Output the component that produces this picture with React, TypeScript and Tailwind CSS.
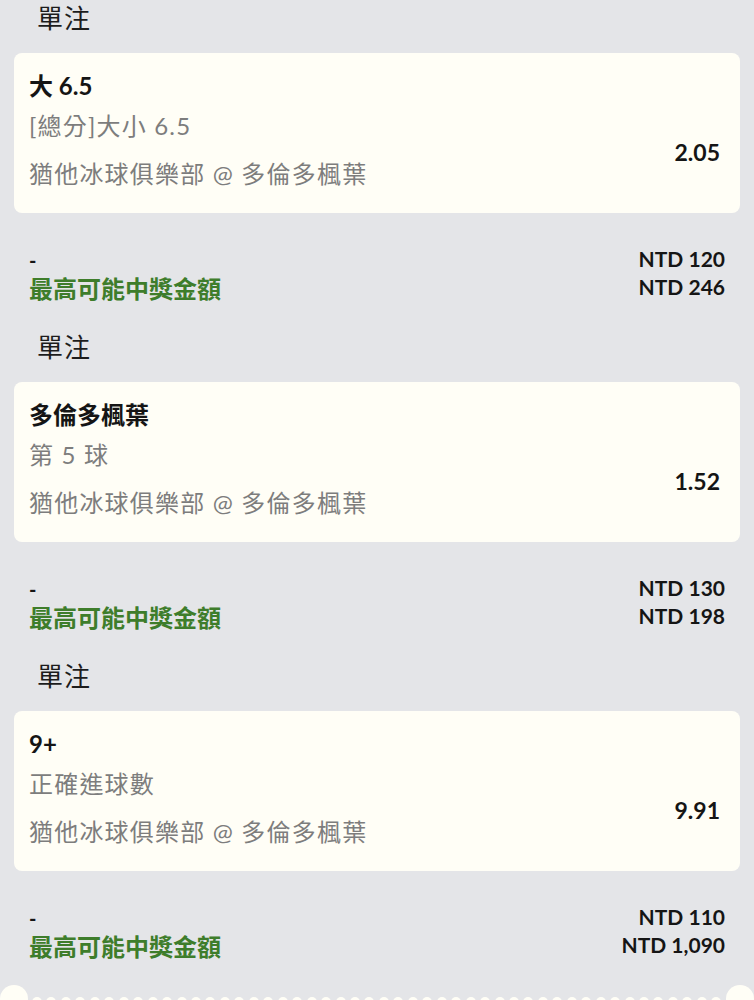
import React from 'react';

type Bet = {
  pick: string;
  market: string;
  event: string;
  odds: string;
  stake: string;
  payout: string;
};

const bets: Bet[] = [
  { pick: '大 6.5', market: '[總分]大小 6.5', event: '猶他冰球俱樂部 @ 多倫多楓葉', odds: '2.05', stake: 'NTD 120', payout: 'NTD 246' },
  { pick: '多倫多楓葉', market: '第 5 球', event: '猶他冰球俱樂部 @ 多倫多楓葉', odds: '1.52', stake: 'NTD 130', payout: 'NTD 198' },
  { pick: '9+', market: '正確進球數', event: '猶他冰球俱樂部 @ 多倫多楓葉', odds: '9.91', stake: 'NTD 110', payout: 'NTD 1,090' },
];

const font = { fontFamily: 'Lato, "Noto Sans CJK TC", sans-serif' };

const BetSection = ({ bet }: { bet: Bet }) => (
  <div className="flex flex-col">
    <div className="pl-[37px] text-[26px] leading-[36px] tracking-[1px] text-[#1c1c1c]">單注</div>

    <div className="mx-[14px] mt-[17px] flex h-[160px] justify-between rounded-[8px] bg-[#fffef6] pl-[15px] pr-[20px]">
      <div className="flex flex-col">
        <div className="mt-[18px] text-[24px] font-bold leading-[30px] text-[#151515]">{bet.pick}</div>
        <div className="mt-[10px] text-[24px] leading-[30px] tracking-[1.2px] text-[#7d7d7d]">{bet.market}</div>
        <div className="mt-[18px] text-[24px] leading-[30px] tracking-[1.2px] text-[#7d7d7d]">{bet.event}</div>
      </div>
      <div className="pt-[84px] text-[23px] font-bold leading-[30px] text-[#151515]">{bet.odds}</div>
    </div>

    <div className="mt-[32px] mb-[24px] flex h-[60px] justify-between pl-[29px] pr-[29px]">
      <div className="flex flex-col">
        <div className="mt-[1px] text-[20px] font-bold leading-[28px] text-[#151515]">-</div>
        <div className="text-[24px] font-bold leading-[30px] text-[#3e7d2b]">最高可能中獎金額</div>
      </div>
      <div className="flex flex-col items-end">
        <div className="text-[21px] font-bold leading-[28px] text-[#151515]">{bet.stake}</div>
        <div className="text-[21px] font-bold leading-[28px] text-[#151515]">{bet.payout}</div>
      </div>
    </div>
  </div>
);

const TicketEdge = () => (
  <div className="mt-[-2px] flex items-start justify-between">
    <div className="h-[28px] w-[28px] shrink-0 rounded-full bg-[#fffef6]" />
    <div className="mt-[12px] flex flex-1 justify-between px-[4px]">
      {Array.from({ length: 48 }).map((_, i) => (
        <div key={i} className="h-[10px] w-[10px] rounded-full bg-[#fffef6]" />
      ))}
    </div>
    <div className="h-[28px] w-[28px] shrink-0 rounded-full bg-[#fffef6]" />
  </div>
);

export default function App() {
  return (
    <div className="min-h-screen overflow-hidden bg-[#e4e5e8]" style={font}>
      <div className="flex flex-col">
        {bets.map((b, i) => (
          <BetSection key={i} bet={b} />
        ))}
      </div>
      <TicketEdge />
    </div>
  );
}
